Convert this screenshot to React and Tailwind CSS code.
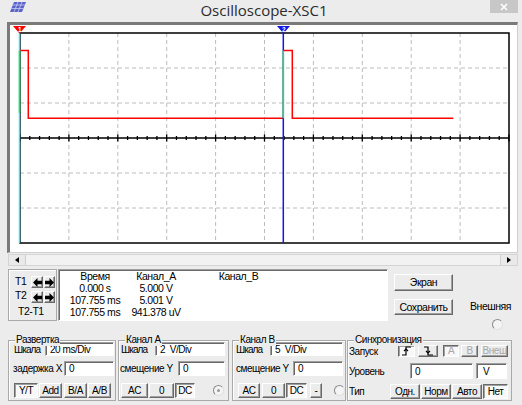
import React from 'react'

const X0 = 20
const X1 = 509
const Y0 = 33
const Y1 = 243
const DX = (X1 - X0) / 10
const DY = (Y1 - Y0) / 6
const YC = Y0 + DY * 3

const raised =
  'border border-t-white border-l-white border-r-[#696969] border-b-[#696969] shadow-[inset_-1px_-1px_0_#a0a0a0] bg-[#ececec]'
const pressed =
  'border border-t-[#696969] border-l-[#696969] border-r-white border-b-white shadow-[inset_1px_1px_0_#a0a0a0] bg-[#f8f8f8]'
const sunken =
  'border border-t-[#a0a0a0] border-l-[#a0a0a0] border-r-white border-b-white shadow-[inset_1px_1px_0_#696969] bg-white'

const Btn = ({ children, className = '', on, off }) => (
  <div
    className={
      'shrink-0 flex items-center justify-center leading-none ' +
      (on ? pressed : raised) +
      (off ? ' text-[#a8a8a8]' : '') +
      ' ' +
      className
    }
  >
    {children}
  </div>
)

const Field = ({ value, className = '' }) => (
  <div className={'shrink-0 flex items-center pl-[4px] whitespace-pre ' + sunken + ' ' + className}>{value}</div>
)

const Radio = ({ dot, className = '' }) => (
  <div
    className={
      'shrink-0 w-[11px] h-[11px] rounded-full border border-t-[#8a8a8a] border-l-[#8a8a8a] border-r-[#e0e0e0] border-b-[#e0e0e0] bg-[#f4f4f4] flex items-center justify-center ' +
      className
    }
  >
    {dot && <div className="w-[3px] h-[3px] rounded-full bg-[#9a9a9a]" />}
  </div>
)

const Group = ({ title, className = '', children }) => (
  <div className={'relative h-[61px] border border-[#a9a9a9] shadow-[inset_1px_1px_0_#fff] ' + className}>
    <span className="absolute -top-[7px] left-[6px] px-[1px] bg-[#ececec] leading-[12px]">{title}</span>
    {children}
  </div>
)

const Arrow = ({ dir }) => (
  <svg width="9" height="9" viewBox="0 0 10 10">
    <polygon
      points={dir === 'left' ? '0,5 5,0 5,3 10,3 10,7 5,7 5,10' : '10,5 5,0 5,3 0,3 0,7 5,7 5,10'}
      fill="#000"
    />
  </svg>
)

const Edge = ({ rise }) => (
  <svg width="11" height="10" viewBox="0 0 11 10">
    <path d={rise ? 'M1 9 H5 V1 H10' : 'M1 1 H5 V9 H10'} stroke="#000" strokeWidth="1.2" fill="none" />
    <path d={rise ? 'M3 5 L5 3 L7 5' : 'M3 5 L5 7 L7 5'} stroke="#000" strokeWidth="1.2" fill="none" />
  </svg>
)

const Plot = () => {
  const ticks = []
  for (let i = 0; i <= 50; i++) {
    const x = X0 + (DX / 5) * i
    const h = i % 5 === 0 ? 3.5 : 2
    ticks.push(<line key={i} x1={x} x2={x} y1={YC - h} y2={YC + h} stroke="#000" strokeWidth="1.3" />)
  }
  return (
    <svg width="507" height="227" className="block">
      <g transform="translate(-10,-25)">
        {[1, 2, 3, 4, 5, 6, 7, 8, 9].map((i) => (
          <line
            key={'v' + i}
            x1={X0 + DX * i}
            x2={X0 + DX * i}
            y1={Y0}
            y2={Y1}
            stroke="#bcbcbc"
            strokeDasharray="4 3"
          />
        ))}
        {[1, 2, 4, 5].map((j) => (
          <line key={'h' + j} x1={X0} x2={X1} y1={Y0 + DY * j} y2={Y0 + DY * j} stroke="#bcbcbc" strokeDasharray="4 3" />
        ))}
        <rect x={X0} y={Y0} width={X1 - X0} height={Y1 - Y0} fill="none" stroke="#000" strokeWidth="1.5" />
        <line x1={X0} x2={X1} y1={YC} y2={YC} stroke="#000" strokeWidth="1.6" />
        {ticks}
        <path d="M20 50.5 H28.3 V118.3 H283.3" stroke="#ff0000" strokeWidth="1.5" fill="none" />
        <path d="M283.3 50.5 H292.3 V118.3 H453.3" stroke="#ff0000" strokeWidth="1.5" fill="none" />
        <line x1="19.5" x2="19.5" y1={Y0} y2={Y1} stroke="#3ddcf5" strokeWidth="1.5" />
        <line x1="19.5" x2="19.5" y1="50.5" y2="113" stroke="#2ee02e" strokeWidth="1.5" />
        <line x1="283.3" x2="283.3" y1={Y0} y2={Y1} stroke="#1414e6" strokeWidth="1.5" />
        <line x1="283.3" x2="283.3" y1="50.5" y2="118.3" stroke="#2ee02e" strokeWidth="1.5" />
        <polygon points="13,26 26,26 19.5,33.5" fill="#ff0000" />
        <text x="19.5" y="31.5" fontSize="6.5" fontWeight="bold" fill="#fff" textAnchor="middle" fontFamily="Liberation Sans, sans-serif">1</text>
        <polygon points="277,26 290,26 283.5,33.5" fill="#1414e6" />
        <text x="283.5" y="31.5" fontSize="6.5" fontWeight="bold" fill="#fff" textAnchor="middle" fontFamily="Liberation Sans, sans-serif">2</text>
      </g>
    </svg>
  )
}

const App = () => {
  return (
    <div className="w-[522px] h-[405px] overflow-hidden bg-[#ececec] text-black text-[10px] tracking-[-0.45px] whitespace-nowrap font-['Liberation_Sans',Arial,sans-serif]">
      {/* title bar */}
      <div className="h-[22px] flex items-start">
        <svg width="16" height="10" viewBox="0 0 16 10" className="ml-[10px] mt-[2px]">
          <polygon points="4,0 16,0 12,10 0,10" fill="#5a63c8" />
          <path d="M2.5 3 H14.8 M1.3 6.5 H13.5 M8 0 L4 10 M12 0 L8 10" stroke="#c9ccf2" strokeWidth="0.8" />
        </svg>
        <div className="flex-1 text-center pl-[12px] text-[15px] leading-[20px] tracking-normal text-[#2b2b2b] font-['Open_Sans',sans-serif]">
          Oscilloscope-XSC1
        </div>
        <div className="w-[28px] h-[13px] mr-[4px] bg-[#c7c7c7] flex items-center justify-center">
          <svg width="8" height="8" viewBox="0 0 8 8">
            <path d="M1 1 L7 7 M7 1 L1 7" stroke="#fff" strokeWidth="1.6" />
          </svg>
        </div>
      </div>

      {/* screen */}
      <div className="ml-[7px] w-[511px] h-[231px] border-t-[3px] border-l-[3px] border-t-[#7a7a7a] border-l-[#7a7a7a] border-r border-b border-r-[#cfcfcf] border-b-[#cfcfcf] bg-white">
        <Plot />
      </div>

      {/* scrollbar */}
      <div className="ml-[8px] mt-[1px] w-[510px] h-[12px] flex border border-[#d4d4d4] bg-[#f2f2f2]">
        <div className="w-[17px] h-full flex items-center justify-center border-r border-[#cfcfcf] bg-[#e9e9e9]">
          <div className="w-0 h-0 border-y-[3px] border-y-transparent border-r-[4px] border-r-black" />
        </div>
        <div className="flex-1" />
        <div className="w-[17px] h-full flex items-center justify-center border-l border-[#cfcfcf] bg-[#e9e9e9]">
          <div className="w-0 h-0 border-y-[3px] border-y-transparent border-l-[4px] border-l-black" />
        </div>
      </div>

      {/* cursor readout */}
      <div className="mt-[3px] h-[52px] flex pl-[8px] text-[10.5px]">
        <div className="w-[49px] h-[52px] border border-[#a9a9a9] shadow-[inset_1px_1px_0_#fff] pt-[6px]">
          <div className="flex items-center h-[12px]">
            <span className="w-[22px] pl-[6px]">T1</span>
            <Btn className="w-[12px] h-[12px]">
              <Arrow dir="left" />
            </Btn>
            <Btn className="w-[11px] h-[12px] ml-[1px]">
              <Arrow dir="right" />
            </Btn>
          </div>
          <div className="flex h-[12px] mt-[3px]">
            <span className="w-[22px] pl-[6px] leading-[8px]">T2</span>
            <Btn className="w-[12px] h-[12px]">
              <Arrow dir="left" />
            </Btn>
            <Btn className="w-[11px] h-[12px] ml-[1px]">
              <Arrow dir="right" />
            </Btn>
          </div>
          <div className="mt-[2px] pl-[9px] leading-[12px]">T2-T1</div>
        </div>

        <div className={'ml-[1px] w-[330px] h-[52px] ' + sunken}>
          <div className="grid grid-cols-[72px_50px_115px] leading-[12px]">
            <span className="flex justify-center">Время</span>
            <span className="flex justify-center">Канал_А</span>
            <span className="flex justify-center">Канал_В</span>
            <span className="flex justify-center">0.000 s</span>
            <span className="flex justify-center">5.000 V</span>
            <span />
            <span className="flex justify-center">107.755 ms</span>
            <span className="flex justify-center">5.001 V</span>
            <span />
            <span className="flex justify-center">107.755 ms</span>
            <span className="flex justify-center">941.378 uV</span>
            <span />
          </div>
        </div>

        <div className="ml-[6px] w-[59px] flex flex-col">
          <Btn className="mt-[5px] h-[17px]">Экран</Btn>
          <Btn className="mt-[8px] h-[16px]">Сохранить</Btn>
        </div>

        <div className="ml-[17px] flex flex-col">
          <span className="mt-[31px] leading-[12px]">Внешняя</span>
          <Radio className="mt-[7px] ml-[22px]" />
        </div>
      </div>

      {/* control groups */}
      <div className="mt-[19px] flex pl-[8px]">
        <Group title="Развертка" className="w-[108px]">
          <div className="mt-[1px] h-[14px] flex items-center pl-[5px]">
            <span className="w-[31px] shrink-0 tracking-[-0.9px]">Шкала</span>
            <Field value="20 ms/Div" className="w-[69px] h-[14px]" />
          </div>
          <div className="mt-[5px] h-[15px] flex items-center pl-[4px]">
            <span className="w-[51px] shrink-0">задержка X</span>
            <Field value="0" className="w-[50px] h-[15px]" />
          </div>
          <div className="mt-[7px] h-[15px] flex pl-[5px]">
            <Btn on className="w-[24px] h-[15px]">Y/T</Btn>
            <Btn className="ml-[1px] w-[23px] h-[15px]">Add</Btn>
            <Btn className="ml-[2px] w-[23px] h-[15px]">B/A</Btn>
            <Btn className="ml-[1px] w-[23px] h-[15px]">A/B</Btn>
          </div>
        </Group>

        <Group title="Канал А" className="ml-[2px] w-[111px]">
          <div className="mt-[1px] h-[14px] flex items-center pl-[2px]">
            <span className="w-[34px] shrink-0 tracking-[-0.9px]">Шкала</span>
            <Field value="2  V/Div" className="w-[70px] h-[14px]" />
          </div>
          <div className="mt-[5px] h-[15px] flex items-center pl-[1px]">
            <span className="w-[58px] shrink-0">смещение Y</span>
            <Field value="0" className="w-[47px] h-[15px]" />
          </div>
          <div className="mt-[7px] h-[15px] flex items-center pl-[2px]">
            <Btn className="w-[27px] h-[15px]">AC</Btn>
            <Btn className="ml-[1px] w-[25px] h-[15px]">0</Btn>
            <Btn on className="ml-[1px] w-[20px] h-[15px]">DC</Btn>
            <Radio dot className="ml-[18px]" />
          </div>
        </Group>

        <Group title="Канал B" className="ml-[3px] w-[114px]">
          <div className="mt-[1px] h-[14px] flex items-center pl-[3px]">
            <span className="w-[34px] shrink-0 tracking-[-0.9px]">Шкала</span>
            <Field value="5  V/Div" className="w-[73px] h-[14px]" />
          </div>
          <div className="mt-[5px] h-[15px] flex items-center pl-[3px]">
            <span className="w-[57px] shrink-0">смещение Y</span>
            <Field value="0" className="w-[50px] h-[15px]" />
          </div>
          <div className="mt-[7px] h-[15px] flex items-center pl-[5px]">
            <Btn className="w-[22px] h-[15px]">AC</Btn>
            <Btn className="ml-[2px] w-[23px] h-[15px]">0</Btn>
            <Btn on className="ml-[1px] w-[21px] h-[15px]">DC</Btn>
            <Btn className="ml-[3px] w-[12px] h-[15px]">-</Btn>
            <Radio className="ml-[12px]" />
          </div>
        </Group>

        <Group title="Синхронизация" className="ml-[1px] w-[165px]">
          <div className="mt-[4px] h-[12px] flex items-center pl-[1px]">
            <span className="w-[49px] shrink-0">Запуск</span>
            <Btn on className="w-[17px] h-[12px]">
              <Edge rise />
            </Btn>
            <Btn className="ml-[3px] w-[20px] h-[12px]">
              <Edge />
            </Btn>
            <Btn on off className="ml-[5px] w-[16px] h-[12px]">A</Btn>
            <Btn off className="ml-[2px] w-[17px] h-[12px]">B</Btn>
            <Btn off className="ml-[3px] w-[27px] h-[12px]">Внеш</Btn>
          </div>
          <div className="mt-[6px] h-[16px] flex items-center pl-[1px]">
            <span className="w-[61px] shrink-0">Уровень</span>
            <Field value="0" className="w-[63px] h-[16px]" />
            <Field value="V" className="ml-[3px] w-[31px] h-[16px] pl-[6px]" />
          </div>
          <div className="mt-[5px] h-[15px] flex items-center pl-[1px]">
            <span className="w-[41px] shrink-0">Тип</span>
            <Btn className="w-[30px] h-[15px]">Одн.</Btn>
            <Btn className="ml-[1px] w-[30px] h-[15px]">Норм</Btn>
            <Btn className="ml-[1px] w-[30px] h-[15px]">Авто</Btn>
            <Btn on className="ml-[1px] w-[25px] h-[15px]">Нет</Btn>
          </div>
        </Group>
      </div>
    </div>
  )
}

export default App
